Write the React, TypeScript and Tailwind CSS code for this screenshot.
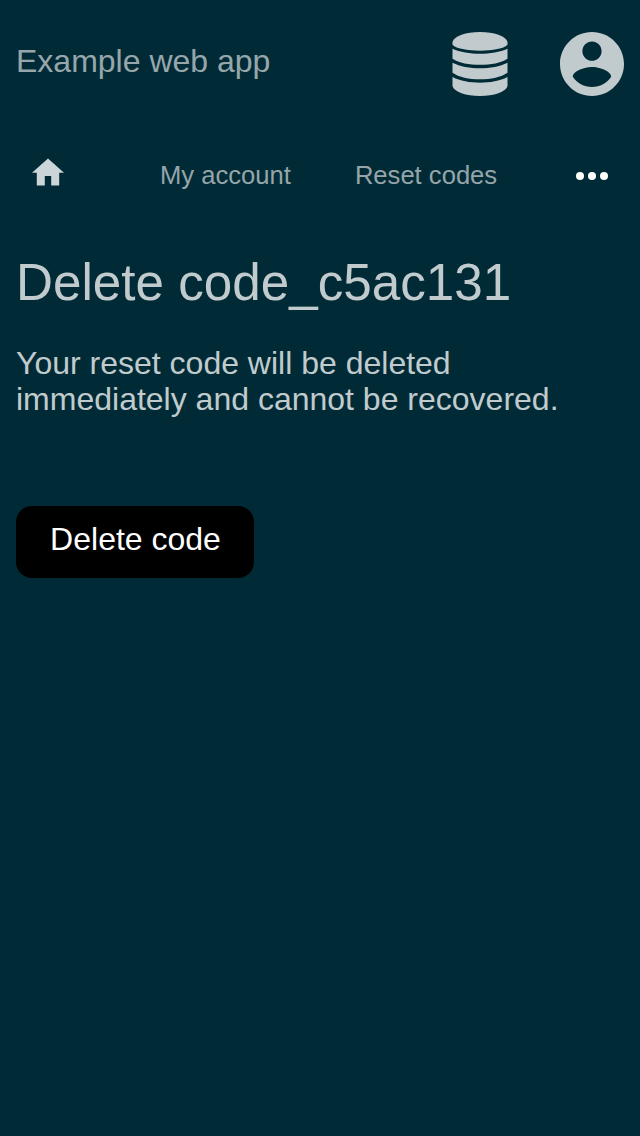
export default function App() {
  return (
    <div className="flex h-[1136px] w-[640px] flex-col bg-[#002b36] px-4 font-['Liberation_Sans',sans-serif] text-[#c1cbce]">
      <header className="flex h-32 items-center justify-between">
        <span className="pb-1.5 text-[32px] leading-9 text-[#97a6ab]">Example web app</span>
        <div className="flex items-center gap-[52px]">
          <svg viewBox="0 0 56 64" className="h-16 w-14" fill="currentColor">
            <path d="M.5 10C2 4 14 0 28 0s26 4 27.500 10v2.500C53 16.500 40 18.700 28 18.700S3 16.500 .5 12.500z" />
            <path d="M.5 16.700C8 20.200 18 21.700 28 21.700s20-1.500 27.500-5V26.700C49 31 39 32.800 28 32.800S7 31 .5 26.700z" />
            <path d="M.5 30.700C8 34.500 18 36.200 28 36.200s20-1.700 27.500-5.500V40.700C49 45.300 39 47.200 28 47.200S7 45.300 .5 40.700z" />
            <path d="M.5 45C8 49 18 50.700 28 50.700s20-1.700 27.500-5.700V54C54 60 42 64 28 64S2 60 .5 54z" />
          </svg>
          <svg viewBox="2 2 20 20" className="size-16" fill="currentColor">
            <path d="M12 2C6.480 2 2 6.480 2 12s4.480 10 10 10 10-4.480 10-10S17.520 2 12 2zm0 3c1.660 0 3 1.340 3 3s-1.340 3-3 3-3-1.340-3-3 1.340-3 3-3zm0 14.200c-2.500 0-4.710-1.280-6-3.220.03-1.990 4-3.080 6-3.080 1.990 0 5.970 1.090 6 3.080-1.290 1.940-3.500 3.220-6 3.220z" />
          </svg>
        </div>
      </header>
      <nav className="flex h-24 items-center pl-4 text-[25.6px] leading-8 text-[#95a5aa]">
        <svg viewBox="2 1.5 20 20" className="mr-24 mb-2 size-8" fill="#ccd5d7">
          <path d="M10 20v-6h4v6h5v-8h3L12 3 2 12h3v8z" />
        </svg>
        <span className="mr-16 pb-0.5">My account</span>
        <span className="pb-0.5">Reset codes</span>
        <svg viewBox="0 0 32 8" className="ml-auto mr-4 h-2 w-8" fill="white">
          <circle cx="4" cy="4" r="4" />
          <circle cx="16" cy="4" r="4" />
          <circle cx="28" cy="4" r="4" />
        </svg>
      </nav>
      <main className="flex flex-col items-start pt-[30px]">
        <h1 className="text-[51.2px] leading-[58px]">Delete code_c5ac131</h1>
        <p className="mt-[33px] text-[32px] leading-9">
          Your reset code will be deleted
          <br />
          immediately and cannot be recovered.
        </p>
        <button className="mt-[89px] flex h-[72px] w-[238px] items-center justify-center rounded-2xl bg-black pb-1.5 pl-px text-[32px] leading-9 text-white">
          Delete code
        </button>
      </main>
    </div>
  );
}
